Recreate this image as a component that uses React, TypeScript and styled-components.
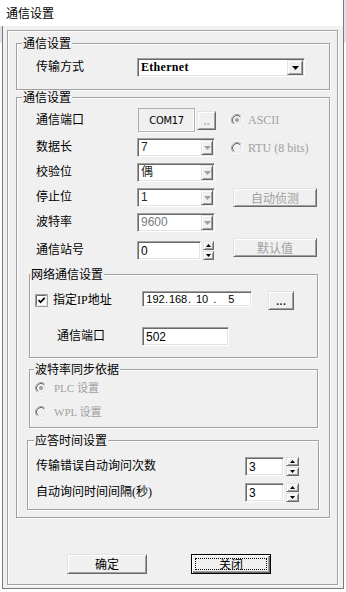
import React from "react";
import styled, { createGlobalStyle, css } from "styled-components";

const GlobalStyle = createGlobalStyle`
  html, body {
    margin: 0;
    padding: 0;
  }
  body {
    font-family: "Liberation Serif", "Noto Sans CJK SC", serif;
    font-size: 12px;
    color: #000;
    background: #fff;
  }
  * {
    box-sizing: border-box;
  }
`;

const cjk = `"Noto Sans CJK SC", "Liberation Sans", sans-serif`;
const sans = `"Liberation Sans", "Noto Sans CJK SC", sans-serif`;

const raised = css`
  background: #f0f0f0;
  border: 1px solid;
  border-color: #e3e3e3 #696969 #696969 #e3e3e3;
  box-shadow: inset 1px 1px 0 #fff, inset -1px -1px 0 #a0a0a0;
`;

const sunken = css`
  border: 1px solid;
  border-color: #a0a0a0 #fff #fff #a0a0a0;
  box-shadow: inset 1px 1px 0 #696969, inset -1px -1px 0 #e3e3e3;
`;

const Page = styled.div`
  width: 346px;
  height: 592px;
  background: linear-gradient(#dbe3ec 0 43px, #fff 43px);
`;

const Window = styled.div`
  width: 344px;
  height: 589px;
  display: flex;
  flex-direction: column;
  border-right: 1px solid #7a7a7a;
`;

const TitleBar = styled.div`
  flex: none;
  height: 26px;
  display: flex;
  align-items: center;
  padding-left: 6px;
  background: #fff;
  font-family: ${cjk};
  font-size: 12px;
  line-height: 14px;
`;

const Body = styled.div`
  flex: 1;
  display: flex;
  margin-left: 2px;
  padding: 4px 5px 3px 4px;
  background: #f0f0f0;
  border-left: 1px solid #7a7a7a;
  border-bottom: 1px solid #7a7a7a;
`;

const Frame = styled.div`
  flex: 1;
  display: flex;
  flex-direction: column;
  padding: 5px 7px 0 8px;
  border: 1px solid #a0a0a0;
  box-shadow: inset 1px 1px 0 #fff, 1px 1px 0 #fff;
`;

const Group = styled.fieldset<{ $w: number; $ml?: number; $mt?: number }>`
  width: ${(p) => p.$w}px;
  min-width: 0;
  margin: ${(p) => p.$mt ?? 0}px 0 0 ${(p) => p.$ml ?? 0}px;
  padding: 0;
  border: 1px solid #a0a0a0;
  box-shadow: inset 1px 1px 0 #fff, 1px 1px 0 #fff;
`;

const Legend = styled.legend<{ $offset: number }>`
  margin-left: ${(p) => p.$offset}px;
  padding: 0 1px;
  background: #f0f0f0;
  font-family: ${cjk};
  font-size: 12px;
  line-height: 14px;
`;

const Label = styled.span<{ $indent?: number }>`
  padding-left: ${(p) => p.$indent ?? 0}px;
  font-family: "Liberation Serif", "Noto Sans CJK SC", serif;
  font-size: 12px;
  line-height: 19px;
  white-space: nowrap;
`;

/* group 1 */
const TransportRow = styled.div`
  display: grid;
  grid-template-columns: 101px 168px;
  align-items: center;
  padding: 8px 0 12px 19px;
`;

/* group 2 */
const SerialBody = styled.div`
  display: flex;
  flex-direction: column;
  padding-bottom: 7px;
`;

const SerialGrid = styled.div`
  display: grid;
  grid-template-columns: 101px 94px 1fr;
  grid-template-rows: 24px 19px 19px 19px 19px 22px;
  row-gap: 6px;
  align-items: center;
  padding: 4px 0 0 19px;
`;

const Cell = styled.div<{ $align?: "start" | "end" | "center"; $ml?: number }>`
  display: flex;
  align-items: center;
  gap: 2px;
  align-self: ${(p) => p.$align ?? "center"};
  margin-left: ${(p) => p.$ml ?? 0}px;
`;

const PortBox = styled.div`
  width: 57px;
  height: 24px;
  margin-left: 1px;
  display: flex;
  align-items: center;
  justify-content: center;
  border: 1px solid #adadad;
  box-shadow: inset -1px -1px 0 #fff, 1px 1px 0 #fff;
  font-family: "DejaVu Sans Condensed", "Liberation Sans Narrow", "Liberation Sans", sans-serif;
  font-stretch: condensed;
  font-size: 11px;
  letter-spacing: -0.3px;
`;

const Combo = styled.div<{ $w: number }>`
  ${sunken};
  width: ${(p) => p.$w}px;
  height: 19px;
  display: flex;
  align-items: center;
  padding: 1px 1px 1px 3px;
  background: #fff;
`;

const ComboText = styled.span<{ $tone: string; $serif?: boolean }>`
  flex: 1;
  font-family: ${(p) => (p.$serif ? `"Liberation Serif", serif` : sans)};
  font-size: 12px;
  font-weight: ${(p) => (p.$serif ? 700 : 400)};
  letter-spacing: ${(p) => (p.$serif ? 0.3 : 0)}px;
  line-height: 15px;
  color: ${(p) => p.$tone};
`;

const DropButton = styled.span<{ $w: number }>`
  ${raised};
  width: ${(p) => p.$w}px;
  height: 15px;
  display: flex;
  align-items: center;
  justify-content: center;
`;

const Edit = styled.div<{ $w: number; $h?: number; $top?: boolean; $size?: number }>`
  ${sunken};
  width: ${(p) => p.$w}px;
  height: ${(p) => p.$h ?? 19}px;
  display: flex;
  align-items: center;
  align-self: ${(p) => (p.$top ? "flex-start" : "auto")};
  padding-left: 3px;
  background: #fff;
  font-family: ${sans};
  font-size: ${(p) => p.$size ?? 12}px;
  white-space: pre;
`;

const SpinStack = styled.div<{ $w: number }>`
  width: ${(p) => p.$w}px;
  height: 19px;
  display: flex;
  flex-direction: column;
  gap: 1px;
`;

const SpinButton = styled.span`
  ${raised};
  flex: 1;
  display: flex;
  align-items: center;
  justify-content: center;
`;

const PushButton = styled.button<{ $w: number; $h?: number; $disabled?: boolean; $default?: boolean }>`
  ${raised};
  width: ${(p) => p.$w}px;
  height: ${(p) => p.$h ?? 19}px;
  display: flex;
  align-items: stretch;
  padding: 3px;
  font-family: ${cjk};
  font-size: 12px;
  line-height: 14px;
  color: ${(p) => (p.$disabled ? "#a0a0a0" : "#000")};
  cursor: default;
  ${(p) =>
    p.$default &&
    css`
      border-color: #000;
      box-shadow: inset 1px 1px 0 #fff, inset -1px -1px 0 #696969, inset -2px -2px 0 #a0a0a0;
    `}
`;

const ButtonFace = styled.span<{ $focus?: boolean }>`
  flex: 1;
  display: flex;
  align-items: center;
  justify-content: center;
  border: 1px dotted ${(p) => (p.$focus ? "#000" : "transparent")};
`;

const Option = styled.span<{ $gap: number; $size?: number }>`
  display: flex;
  align-items: center;
  gap: ${(p) => p.$gap}px;
  font-family: "Liberation Serif", "Noto Sans CJK SC", serif;
  font-size: ${(p) => p.$size ?? 12}px;
  line-height: 16px;
  color: #a0a0a0;
  white-space: nowrap;
`;

/* 网络通信设置 */
const NetGrid = styled.div`
  display: grid;
  grid-template-columns: 107px 1fr;
  grid-template-rows: 22px 19px;
  row-gap: 16px;
  align-items: center;
  padding: 8px 0 11px 5px;
`;

const CheckRow = styled.span`
  display: flex;
  align-items: center;
  gap: 5px;
`;

const IpRow = styled.div`
  display: flex;
  align-items: center;
  gap: 16px;
`;

const IpField = styled.span<{ $w: number }>`
  width: ${(p) => p.$w}px;
  text-align: center;
`;

/* 波特率同步依据 */
const SyncList = styled.div`
  display: flex;
  flex-direction: column;
  gap: 8px;
  padding: 4px 0 7px 5px;
`;

/* 应答时间设置 */
const TimeGrid = styled.div`
  display: grid;
  grid-template-columns: 209px auto;
  row-gap: 7px;
  align-items: center;
  padding: 10px 0 7px 8px;
`;

const Footer = styled.div`
  display: flex;
  gap: 44px;
  margin-top: 36px;
  padding-left: 51px;
`;

const Arrow: React.FC<{ dim?: boolean }> = ({ dim }) => (
  <svg width="7" height="4" viewBox="0 0 7 4">
    <polygon points="0,0 7,0 3.5,4" fill={dim ? "#a0a0a0" : "#000"} />
  </svg>
);

const TinyArrow: React.FC<{ up?: boolean }> = ({ up }) => (
  <svg width="5" height="3" viewBox="0 0 5 3">
    <polygon points={up ? "0,3 5,3 2.5,0" : "0,0 5,0 2.5,3"} fill="#000" />
  </svg>
);

const RadioMark: React.FC<{ checked?: boolean }> = ({ checked }) => (
  <svg width="12" height="12" viewBox="0 0 12 12">
    <circle cx="6" cy="6" r="5" fill="#f0f0f0" />
    <circle cx="6" cy="6" r="5.5" fill="none" stroke="#fff" />
    <circle cx="6" cy="6" r="4.5" fill="none" stroke="#e3e3e3" />
    <path d="M2.11 9.89 A5.5 5.5 0 0 1 9.89 2.11" fill="none" stroke="#a0a0a0" />
    <path d="M2.82 9.18 A4.5 4.5 0 0 1 9.18 2.82" fill="none" stroke="#696969" />
    {checked && <circle cx="6" cy="6" r="2" fill="#a0a0a0" />}
  </svg>
);

const CheckMark: React.FC = () => (
  <svg width="13" height="13" viewBox="0 0 13 13">
    <rect x="0.5" y="0.5" width="12" height="12" fill="#fff" stroke="#a0a0a0" />
    <path d="M1.5 11.5 V1.5 H11.5" fill="none" stroke="#696969" />
    <path d="M1.5 11.5 H11.5 V1.5" fill="none" stroke="#e3e3e3" />
    <polyline points="3.5,6 5.5,8.2 9.8,3.8" fill="none" stroke="#000" strokeWidth="1.7" />
  </svg>
);

const Select: React.FC<{ w: number; value: string; disabled?: boolean; tone?: string; serif?: boolean; btn?: number }> = ({
  w,
  value,
  disabled,
  tone = "#2b2b2b",
  serif,
  btn = 12,
}) => (
  <Combo $w={w}>
    <ComboText $tone={tone} $serif={serif}>
      {value}
    </ComboText>
    <DropButton $w={btn}>
      <Arrow dim={disabled} />
    </DropButton>
  </Combo>
);

const Spinner: React.FC<{ w: number }> = ({ w }) => (
  <SpinStack $w={w}>
    <SpinButton>
      <TinyArrow up />
    </SpinButton>
    <SpinButton>
      <TinyArrow />
    </SpinButton>
  </SpinStack>
);

export default function App() {
  return (
    <Page>
      <GlobalStyle />
      <Window>
        <TitleBar>通信设置</TitleBar>
        <Body>
          <Frame>
            <Group $w={314}>
              <Legend $offset={5}>通信设置</Legend>
              <TransportRow>
                <Label>传输方式</Label>
                <Select w={168} value="Ethernet" serif tone="#000" btn={16} />
              </TransportRow>
            </Group>

            <Group $w={314}>
              <Legend $offset={5}>通信设置</Legend>
              <SerialBody>
                <SerialGrid>
                  <Label>通信端口</Label>
                  <Cell>
                    <PortBox>COM17</PortBox>
                    <PushButton $w={19} $disabled>
                      <ButtonFace>..</ButtonFace>
                    </PushButton>
                  </Cell>
                  <Option $gap={5}>
                    <RadioMark checked />
                    ASCII
                  </Option>

                  <Label>数据长</Label>
                  <Select w={78} value="7" disabled />
                  <Option $gap={5}>
                    <RadioMark />
                    RTU (8 bits)
                  </Option>

                  <Label>校验位</Label>
                  <Select w={78} value="偶" disabled />
                  <span />

                  <Label>停止位</Label>
                  <Select w={78} value="1" disabled />
                  <Cell $ml={2}>
                    <PushButton $w={84} $disabled>
                      <ButtonFace>自动侦测</ButtonFace>
                    </PushButton>
                  </Cell>

                  <Label>波特率</Label>
                  <Select w={78} value="9600" disabled tone="#7a7a7a" />
                  <span />

                  <Cell $align="end">
                    <Label>通信站号</Label>
                  </Cell>
                  <Cell $align="end">
                    <Edit $w={64}>0</Edit>
                    <Spinner w={11} />
                  </Cell>
                  <Cell $align="start" $ml={2}>
                    <PushButton $w={84} $disabled>
                      <ButtonFace>默认值</ButtonFace>
                    </PushButton>
                  </Cell>
                </SerialGrid>

                <Group $w={289} $ml={12} $mt={7}>
                  <Legend $offset={0}>网络通信设置</Legend>
                  <NetGrid>
                    <CheckRow>
                      <CheckMark />
                      <Label>指定IP地址</Label>
                    </CheckRow>
                    <IpRow>
                      <Edit $w={110} $h={16} $top $size={11}>
                        <IpField $w={19}>192</IpField>.<IpField $w={20}>168</IpField>.
                        <IpField $w={22}>10</IpField>.<IpField $w={30}>5</IpField>
                      </Edit>
                      <PushButton $w={26}>
                        <ButtonFace>...</ButtonFace>
                      </PushButton>
                    </IpRow>
                    <Label $indent={22}>通信端口</Label>
                    <Edit $w={87}>502</Edit>
                  </NetGrid>
                </Group>

                <Group $w={289} $ml={12} $mt={4}>
                  <Legend $offset={4}>波特率同步依据</Legend>
                  <SyncList>
                    <Option $gap={7} $size={11}>
                      <RadioMark checked />
                      PLC 设置
                    </Option>
                    <Option $gap={7} $size={11}>
                      <RadioMark />
                      WPL 设置
                    </Option>
                  </SyncList>
                </Group>

                <Group $w={292} $ml={10} $mt={5}>
                  <Legend $offset={6}>应答时间设置</Legend>
                  <TimeGrid>
                    <Label>传输错误自动询问次数</Label>
                    <Cell>
                      <Edit $w={39}>3</Edit>
                      <Spinner w={13} />
                    </Cell>
                    <Label>自动询问时间间隔(秒)</Label>
                    <Cell>
                      <Edit $w={39}>3</Edit>
                      <Spinner w={13} />
                    </Cell>
                  </TimeGrid>
                </Group>
              </SerialBody>
            </Group>

            <Footer>
              <PushButton $w={80} $h={20}>
                <ButtonFace>确定</ButtonFace>
              </PushButton>
              <PushButton $w={80} $h={20} $default>
                <ButtonFace $focus>关闭</ButtonFace>
              </PushButton>
            </Footer>
          </Frame>
        </Body>
      </Window>
    </Page>
  );
}
